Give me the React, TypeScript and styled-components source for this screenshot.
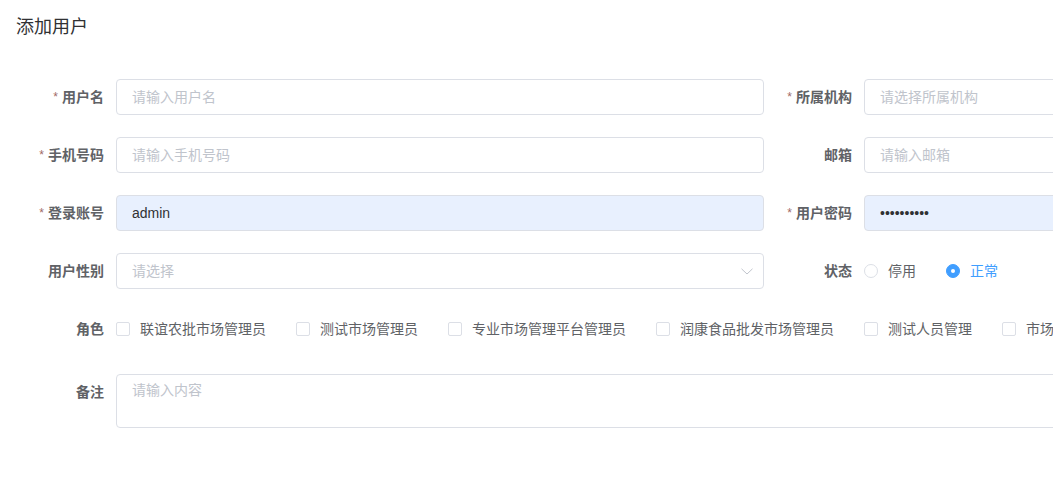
import React from 'react';
import styled, { createGlobalStyle } from 'styled-components';

const GlobalStyle = createGlobalStyle`
	html, body {
		margin: 0;
		padding: 0;
		background: #ffffff;
		overflow: hidden;
	}
	body {
		font-family: 'Liberation Sans', 'Noto Sans CJK SC', sans-serif;
		font-size: 14px;
		color: #606266;
	}
`;

const StyledPage = styled.div`
	width: 1530px;
	padding: 15px 16px 40px;
	box-sizing: border-box;
`;
const StyledTitle = styled.h2`
	margin: 0 0 40px;
	font-size: 18px;
	line-height: 24px;
	font-weight: 400;
	color: #303133;
`;
const StyledForm = styled.form`
	display: grid;
	grid-template-columns: 748px 748px;
	column-gap: 0;
`;
const StyledItem = styled.div<{ $full?: boolean; $gap?: number }>`
	display: flex;
	align-items: flex-start;
	grid-column: ${(p) => (p.$full ? '1 / span 2' : 'auto')};
	margin-bottom: ${(p) => p.$gap ?? 22}px;
`;
const StyledLabel = styled.label`
	flex: 0 0 100px;
	box-sizing: border-box;
	padding-right: 12px;
	text-align: right;
	line-height: 36px;
	font-size: 14px;
	font-weight: 700;
	color: #606266;
	white-space: nowrap;
`;
const StyledStar = styled.span`
	color: #a06a66;
	font-size: 12px;
	font-weight: 400;
	margin-right: 4px;
	vertical-align: 1px;
`;
const StyledControl = styled.div`
	flex: 1;
	position: relative;
	min-height: 36px;
	display: flex;
	align-items: center;
`;
const StyledInput = styled.input<{ $filled?: boolean }>`
	width: 100%;
	height: 36px;
	box-sizing: border-box;
	padding: 0 15px;
	border: 1px solid #dcdfe6;
	border-radius: 4px;
	background: ${(p) => (p.$filled ? '#e8f0fe' : '#ffffff')};
	font-family: inherit;
	font-size: 14px;
	color: #303133;
	outline: none;
	&::placeholder {
		color: #c0c4cc;
	}
`;
const StyledTextarea = styled.textarea`
	width: 100%;
	height: 54px;
	box-sizing: border-box;
	padding: 5px 15px;
	border: 1px solid #dcdfe6;
	border-radius: 4px;
	font-family: inherit;
	font-size: 14px;
	line-height: 21px;
	resize: none;
	outline: none;
	&::placeholder {
		color: #c0c4cc;
	}
`;
const StyledArrow = styled.span`
	position: absolute;
	right: 5px;
	top: 0;
	width: 25px;
	height: 36px;
	display: flex;
	align-items: center;
	justify-content: center;
	pointer-events: none;
`;
const StyledChoice = styled.label<{ $checked?: boolean }>`
	display: inline-flex;
	align-items: center;
	margin-right: 30px;
	font-size: 14px;
	line-height: 36px;
	white-space: nowrap;
	color: ${(p) => (p.$checked ? '#409eff' : '#606266')};
`;
const StyledRadio = styled.span<{ $checked?: boolean }>`
	width: 14px;
	height: 14px;
	box-sizing: border-box;
	border-radius: 50%;
	border: 1px solid ${(p) => (p.$checked ? '#409eff' : '#dcdfe6')};
	background: ${(p) => (p.$checked ? '#409eff' : '#ffffff')};
	margin-right: 10px;
	display: flex;
	align-items: center;
	justify-content: center;
	&::after {
		content: '';
		width: 4px;
		height: 4px;
		border-radius: 50%;
		background: #ffffff;
		display: ${(p) => (p.$checked ? 'block' : 'none')};
	}
`;
const StyledBox = styled.span`
	width: 14px;
	height: 14px;
	box-sizing: border-box;
	border: 1px solid #dcdfe6;
	border-radius: 2px;
	background: #ffffff;
	margin-right: 10px;
`;
const StyledGroup = styled.div`
	display: flex;
	flex-wrap: nowrap;
	align-items: center;
`;

const roles = [
	'联谊农批市场管理员',
	'测试市场管理员',
	'专业市场管理平台管理员',
	'润康食品批发市场管理员',
	'测试人员管理',
	'市场管理员',
];

export default function App() {
	return (
		<StyledPage>
			<GlobalStyle />
			<StyledTitle>添加用户</StyledTitle>
			<StyledForm autoComplete='off'>
				<StyledItem>
					<StyledLabel><StyledStar>*</StyledStar>用户名</StyledLabel>
					<StyledControl><StyledInput placeholder='请输入用户名' /></StyledControl>
				</StyledItem>
				<StyledItem>
					<StyledLabel><StyledStar>*</StyledStar>所属机构</StyledLabel>
					<StyledControl><StyledInput placeholder='请选择所属机构' readOnly /></StyledControl>
				</StyledItem>
				<StyledItem>
					<StyledLabel><StyledStar>*</StyledStar>手机号码</StyledLabel>
					<StyledControl><StyledInput placeholder='请输入手机号码' /></StyledControl>
				</StyledItem>
				<StyledItem>
					<StyledLabel>邮箱</StyledLabel>
					<StyledControl><StyledInput placeholder='请输入邮箱' /></StyledControl>
				</StyledItem>
				<StyledItem>
					<StyledLabel><StyledStar>*</StyledStar>登录账号</StyledLabel>
					<StyledControl><StyledInput $filled defaultValue='admin' /></StyledControl>
				</StyledItem>
				<StyledItem>
					<StyledLabel><StyledStar>*</StyledStar>用户密码</StyledLabel>
					<StyledControl><StyledInput $filled type='password' defaultValue='1234567890' /></StyledControl>
				</StyledItem>
				<StyledItem>
					<StyledLabel>用户性别</StyledLabel>
					<StyledControl>
						<StyledInput placeholder='请选择' readOnly />
						<StyledArrow>
							<svg width='12' height='7' viewBox='0 0 12 7'>
								<path d='M0.5 0.8 L6 6 L11.5 0.8' fill='none' stroke='#c0c4cc' strokeWidth='1' />
							</svg>
						</StyledArrow>
					</StyledControl>
				</StyledItem>
				<StyledItem>
					<StyledLabel>状态</StyledLabel>
					<StyledControl>
						<StyledChoice><StyledRadio />停用</StyledChoice>
						<StyledChoice $checked><StyledRadio $checked />正常</StyledChoice>
					</StyledControl>
				</StyledItem>
				<StyledItem $full $gap={27}>
					<StyledLabel>角色</StyledLabel>
					<StyledControl>
						<StyledGroup>
							{roles.map((r) => (
								<StyledChoice key={r}><StyledBox />{r}</StyledChoice>
							))}
						</StyledGroup>
					</StyledControl>
				</StyledItem>
				<StyledItem $full>
					<StyledLabel>备注</StyledLabel>
					<StyledControl><StyledTextarea placeholder='请输入内容' /></StyledControl>
				</StyledItem>
			</StyledForm>
		</StyledPage>
	);
}
